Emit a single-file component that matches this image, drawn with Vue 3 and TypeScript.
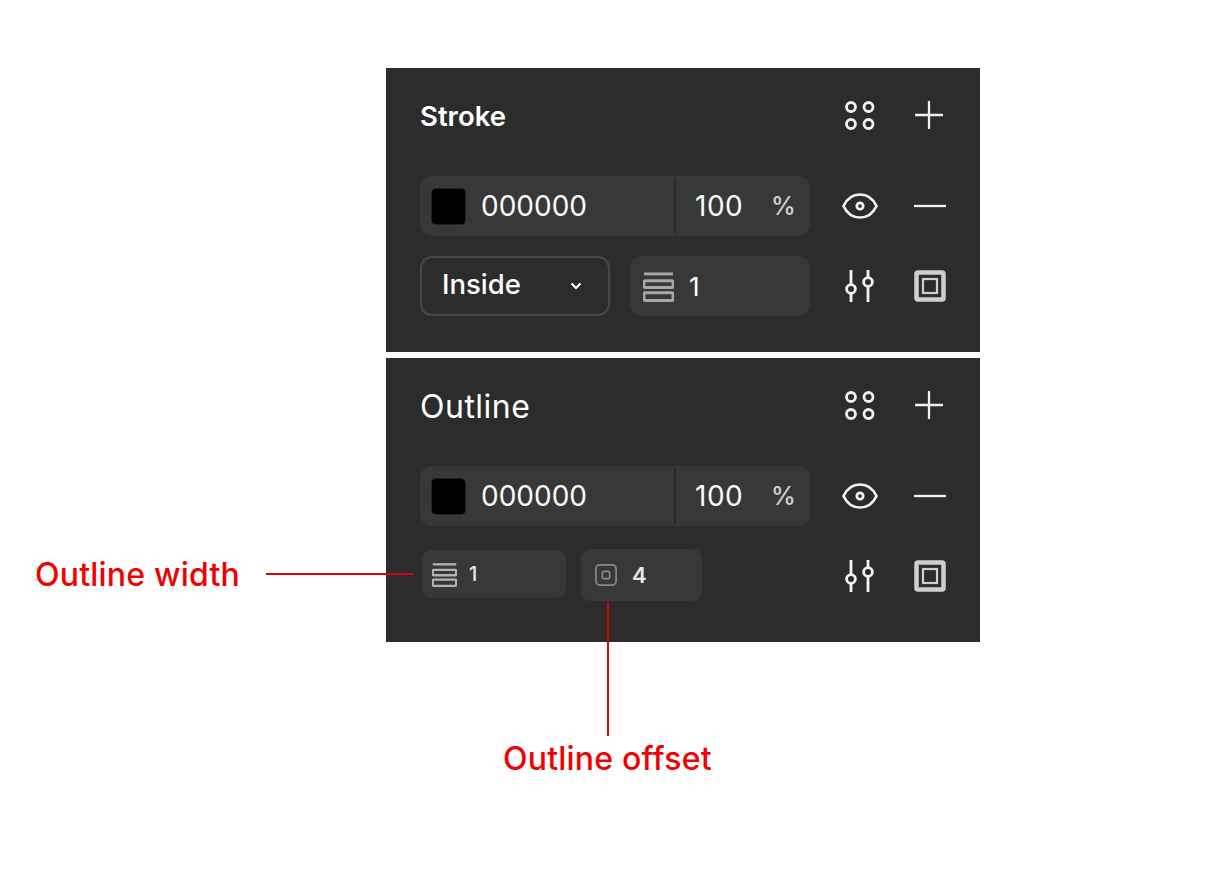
<script setup lang="ts">
const panels = [
  { key: 'stroke', title: 'Stroke' },
  { key: 'outline', title: 'Outline' }
]
</script>

<template>
  <div class="page">
    <svg class="sprite" aria-hidden="true">
      <symbol id="i-styles" viewBox="0 0 32 32">
        <circle cx="7" cy="8" r="4.500" /><circle cx="24.500" cy="8" r="4.500" />
        <circle cx="7" cy="25" r="4.500" /><circle cx="24.500" cy="25" r="4.500" />
      </symbol>
      <symbol id="i-plus" viewBox="0 0 32 32"><path d="M16 2v28M2 16h28" /></symbol>
      <symbol id="i-minus" viewBox="0 0 32 32"><path d="M0 16h32" /></symbol>
      <symbol id="i-eye" viewBox="0 0 36 28">
        <path d="M1.500 14C5 6.500 11 2.500 18 2.500S31 6.500 34.500 14C31 21.500 25 25.500 18 25.500S5 21.500 1.500 14Z" />
        <circle cx="18" cy="14" r="3.200" />
      </symbol>
      <symbol id="i-sliders" viewBox="0 0 32 32">
        <path d="M7 0v14M7 24v8M24 0v7M24 17v15" />
        <circle cx="7" cy="19" r="4.400" /><circle cx="24" cy="12" r="4.400" />
      </symbol>
      <symbol id="i-frame" viewBox="0 0 32 32">
        <rect x="2.500" y="2.500" width="27" height="27" rx="1.500" stroke-width="4.500" />
        <rect x="9" y="9" width="14" height="14" stroke-width="2.200" />
      </symbol>
      <symbol id="i-width" viewBox="0 0 32 32">
        <path d="M1 3h30" />
        <rect x="1" y="10" width="30" height="7" rx="1.500" />
        <rect x="1" y="22.500" width="30" height="8" rx="1.500" />
      </symbol>
      <symbol id="i-offset" viewBox="0 0 24 24">
        <rect x="1" y="1" width="22" height="22" rx="4.500" />
        <rect x="8" y="8" width="8" height="8" rx="1.500" />
      </symbol>
    </svg>

    <section v-for="panel in panels" :key="panel.key" class="panel">
      <div class="row head">
        <h2 class="title" :class="panel.key">{{ panel.title }}</h2>
        <div class="actions">
          <svg class="ico dots"><use href="#i-styles" /></svg>
          <svg class="ico plus"><use href="#i-plus" /></svg>
        </div>
      </div>

      <div class="row fields">
        <div class="controls">
          <div class="color-field">
            <span class="swatch"></span>
            <span class="hex">000000</span>
            <span class="sep"></span>
            <span class="opacity">100</span>
            <span class="pct">%</span>
          </div>
        </div>
        <div class="actions">
          <svg class="ico eye"><use href="#i-eye" /></svg>
          <svg class="ico minus"><use href="#i-minus" /></svg>
        </div>
      </div>

      <div class="row fields last">
        <div v-if="panel.key === 'stroke'" class="controls two">
          <div class="select">
            <span class="select-text">Inside</span>
            <svg class="chev" viewBox="0 0 12 8"><path d="M1.500 1.500 6 6l4.500-4.500" /></svg>
          </div>
          <div class="num-field">
            <svg class="ico width"><use href="#i-width" /></svg>
            <span class="num">1</span>
          </div>
        </div>
        <div v-else class="controls small">
          <div class="mini w">
            <svg class="ico width-sm"><use href="#i-width" /></svg>
            <span class="num-sm">1</span>
          </div>
          <div class="mini o">
            <svg class="ico offset"><use href="#i-offset" /></svg>
            <span class="num-sm four">4</span>
          </div>
        </div>
        <div class="actions">
          <svg class="ico sliders"><use href="#i-sliders" /></svg>
          <svg class="ico frame"><use href="#i-frame" /></svg>
        </div>
      </div>
    </section>

    <!-- callouts sit over the panel -->
    <span class="label label-width">Outline width</span>
    <span class="line line-width"></span>
    <span class="line line-offset"></span>
    <span class="label label-offset">Outline offset</span>
  </div>
</template>

<style>
html,
body {
  background: #fff;
}
</style>

<style scoped>
.page {
  position: relative;
  width: 1230px;
  height: 882px;
  padding: 68px 250px 0 386px;
  box-sizing: border-box;
  background: #fff;
  font-family: Inter, 'Liberation Sans', sans-serif;
  overflow: hidden;
}
.sprite {
  position: absolute;
  width: 0;
  height: 0;
}
.panel {
  height: 284px;
  margin-bottom: 6px;
  padding: 24px 30px 36px 34px;
  box-sizing: border-box;
  background: #2c2c2c;
  color: #fff;
}
.row {
  display: flex;
  align-items: center;
  justify-content: space-between;
}
.head {
  height: 48px;
  margin-bottom: 36px;
}
.head .actions {
  margin-bottom: 2px;
}
.fields {
  height: 60px;
}
.fields.last {
  margin-top: 20px;
}
.title {
  margin: 2px 0 0;
  font-size: 27.500px;
  line-height: 1;
}
.title.stroke {
  font-weight: 600;
}
.title.outline {
  font-weight: 400;
  font-size: 32px;
  letter-spacing: 0.500px;
}
.controls {
  width: 390px;
  height: 60px;
}
.controls.two {
  display: flex;
  justify-content: space-between;
}
.controls.small {
  display: flex;
  align-items: flex-start;
}
.color-field {
  display: flex;
  align-items: center;
  height: 60px;
  border-radius: 12px;
  background: #383838;
  font-size: 28px;
  color: #fafafa;
}
.swatch {
  width: 33px;
  height: 35px;
  margin-left: 12px;
  border-radius: 4px;
  background: #000;
  box-shadow: 0 0 0 1px #222;
}
.hex {
  width: 193px;
  margin-left: 16px;
}
.sep {
  width: 2px;
  height: 56px;
  background: #2a2a2a;
}
.opacity {
  width: 76px;
  margin-left: 19px;
  letter-spacing: 0.500px;
}
.pct {
  font-size: 25px;
  font-weight: 500;
  color: #d0d0d0;
}
.select {
  display: flex;
  align-items: center;
  justify-content: space-between;
  width: 190px;
  height: 60px;
  padding: 0 26px 0 20px;
  box-sizing: border-box;
  border: 2px solid #484848;
  border-radius: 12px;
}
.select-text {
  margin-bottom: 4px;
  font-size: 27.500px;
  font-weight: 500;
}
.chev {
  width: 12px;
  height: 8px;
  fill: none;
  stroke: #fff;
  stroke-width: 2;
}
.num-field {
  display: flex;
  align-items: center;
  width: 180px;
  height: 60px;
  padding-left: 13px;
  box-sizing: border-box;
  border-radius: 12px;
  background: #383838;
}
.num {
  margin-left: 15px;
  font-size: 26px;
}
.mini {
  display: flex;
  align-items: center;
  box-sizing: border-box;
  border-radius: 9px;
  background: #383838;
}
.mini.w {
  width: 144px;
  height: 48px;
  margin: 4px 0 0 2px;
  padding-left: 10px;
}
.mini.o {
  width: 121px;
  height: 52px;
  margin: 3px 0 0 15px;
  padding-left: 14px;
}
.num-sm {
  margin-left: 12px;
  font-size: 20px;
  font-weight: 500;
  color: #e8e8e8;
}
.num-sm.four {
  margin-left: 15px;
  font-size: 22px;
  font-weight: 600;
}
.actions {
  display: flex;
  align-items: center;
  justify-content: space-between;
  width: 110px;
  height: 40px;
}
.ico {
  display: block;
  fill: none;
  stroke: #f2f2f2;
  stroke-width: 2.300;
  flex: none;
}
.dots {
  width: 32px;
  height: 32px;
  margin-left: 4px;
  stroke-width: 2.800;
}
.plus {
  width: 32px;
  height: 32px;
  margin-right: 5px;
}
.minus {
  width: 32px;
  height: 32px;
  margin-right: 4px;
}
.eye {
  width: 36px;
  height: 28px;
  margin-left: 2px;
  stroke-width: 2.700;
}
.sliders {
  width: 32px;
  height: 32px;
  margin-left: 4px;
  stroke-width: 2.800;
}
.frame {
  width: 32px;
  height: 32px;
  margin-right: 4px;
  stroke: #cfcfcf;
}
.width {
  width: 31px;
  height: 33px;
  stroke: #a8a8a8;
  stroke-width: 3;
}
.width-sm {
  width: 25px;
  height: 25px;
  stroke: #b4b4b4;
  stroke-width: 3;
}
.offset {
  width: 22px;
  height: 24px;
  stroke: #8a8a8a;
  stroke-width: 1.800;
}
.label {
  position: absolute;
  font-size: 32px;
  font-weight: 500;
  line-height: 1;
  letter-spacing: 0.200px;
  color: #f00000;
  white-space: nowrap;
}
.label-width {
  left: 35px;
  top: 559px;
}
.label-offset {
  left: 503px;
  top: 743px;
}
.line {
  position: absolute;
  background: #d90012;
}
.line-width {
  left: 266px;
  top: 573px;
  width: 148px;
  height: 2px;
}
.line-offset {
  left: 607px;
  top: 602px;
  width: 2px;
  height: 134px;
}
</style>
